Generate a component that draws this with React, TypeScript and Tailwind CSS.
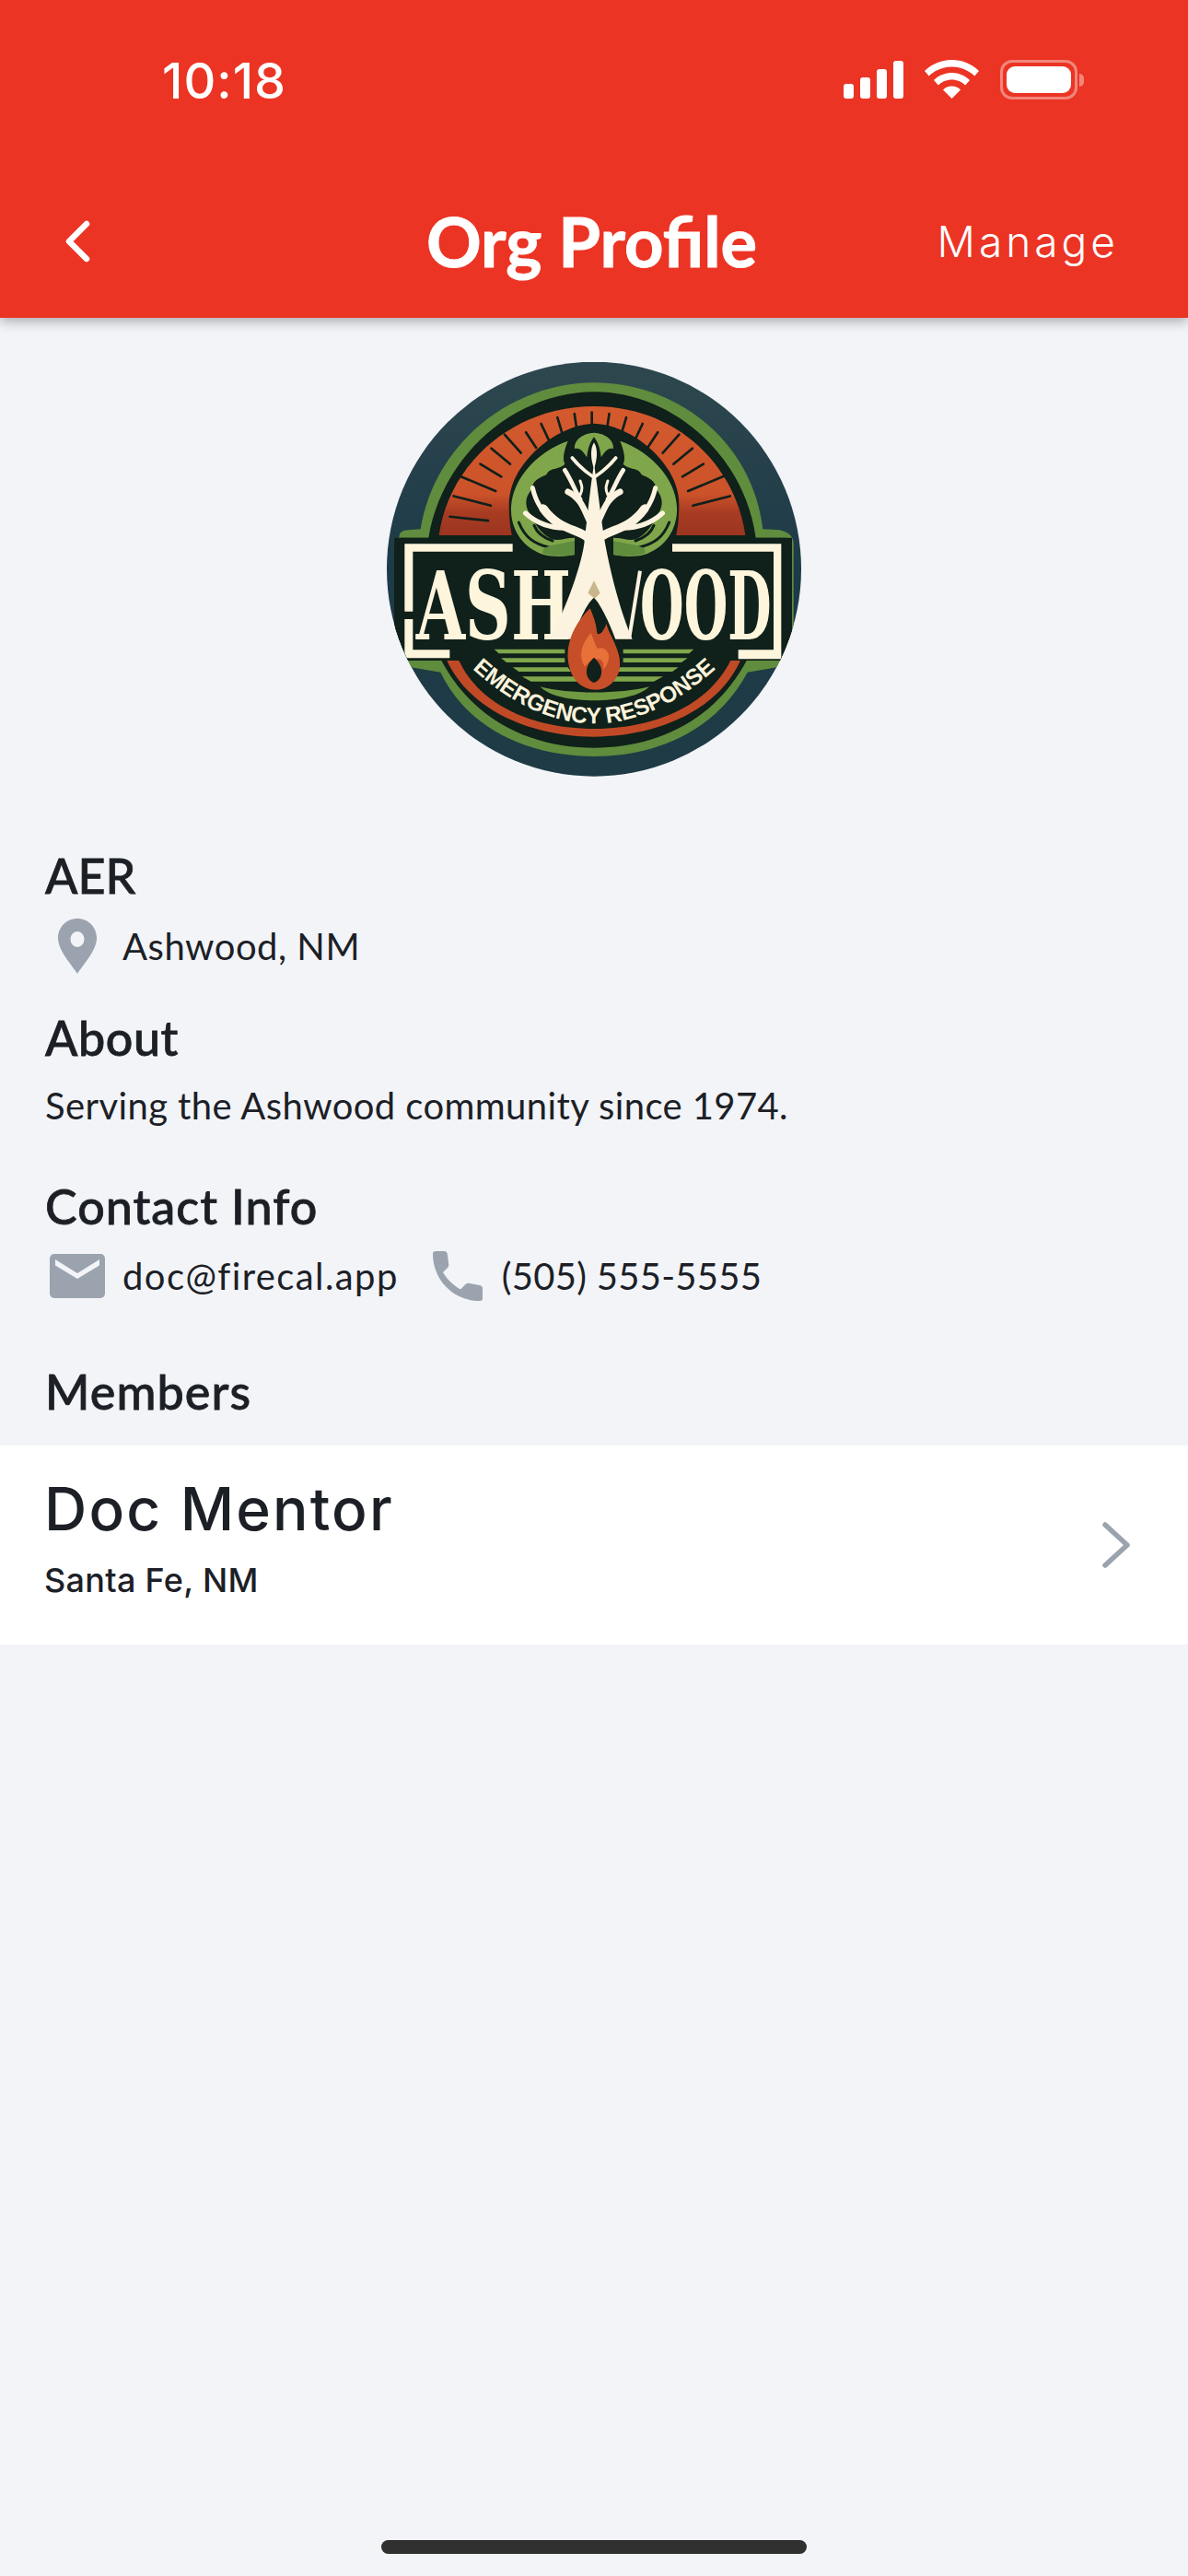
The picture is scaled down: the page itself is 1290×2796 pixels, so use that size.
const ink = "text-[#1c2026]";
const outfit = { fontFamily: "Lato, 'Noto Sans', sans-serif" };
const poppins = { fontFamily: "Inter, 'Noto Sans', sans-serif" };
const head = "[-webkit-text-stroke:0.8px_#1c2026]";

const BLACK = "#10201a";
const CREAM = "#fbf3df";

function HalfFoliage() {
  return (
    <g>
      <path d="M650 325 C560 355 470 440 465 540 C462 610 500 670 570 695 C610 705 650 700 672 695 L672 640 C640 640 610 655 590 640 C560 625 540 590 525 560 C505 530 515 500 535 480 C530 460 555 445 580 435 C590 410 620 420 640 400 C630 380 640 350 650 325 Z" fill="#7fa64a" />
      <path d="M490 590 C510 640 540 660 590 672 M540 600 C550 625 570 640 600 650" fill="none" stroke={BLACK} strokeWidth="9" strokeLinecap="round" />
      <path d="M625 660 C590 665 560 672 570 692 C610 702 650 700 672 695 L672 650 Z" fill="#5f8c3d" />
      <path d="M735 298 C700 300 670 320 672 350 C690 345 700 360 712 378 C715 345 725 325 735 312 Z" fill="#7fa64a" />
    </g>
  );
}

function HalfBranches() {
  return (
    <g fill="none" stroke={CREAM} strokeLinecap="round" strokeLinejoin="round">
      <path d="M715 640 C680 610 620 615 570 545" strokeWidth="28" />
      <path d="M590 570 C560 550 545 520 535 478" strokeWidth="15" />
      <path d="M640 608 C590 608 545 590 512 560" strokeWidth="16" />
      <path d="M722 590 C700 540 690 510 650 490" strokeWidth="20" />
      <path d="M690 515 C670 480 660 450 640 420" strokeWidth="14" />
      <path d="M690 500 C700 480 695 470 690 455" strokeWidth="9" />
      <path d="M730 440 C700 420 680 400 664 380" strokeWidth="11" />
    </g>
  );
}

function Logo() {
  const rays: number[] = [];
  for (let a = -84; a <= 84; a += 8.4) rays.push(a);
  const mirror = "translate(1470,0) scale(-1,1)";
  return (
    <svg viewBox="60 68 1350 1350" className="w-[450px] h-[450px] block">
      <defs>
        <linearGradient id="bgG" x1="0" y1="0" x2="0" y2="1">
          <stop offset="0" stopColor="#30494f" />
          <stop offset="0.5" stopColor="#1d3a48" />
          <stop offset="1" stopColor="#1f3b45" />
        </linearGradient>
        <linearGradient id="redG" x1="0" y1="0" x2="0" y2="1">
          <stop offset="0" stopColor="#d45a2e" />
          <stop offset="0.68" stopColor="#cc5229" />
          <stop offset="0.82" stopColor="#a83c22" />
          <stop offset="1" stopColor="#9c3520" />
        </linearGradient>
        <clipPath id="cc"><circle cx="735" cy="742" r="675" /></clipPath>
        <path id="arcT" d="M 300 1030 Q 735 1460 1170 1030" fill="none" />
      </defs>
      <g clipPath="url(#cc)">
        <rect x="0" y="0" width="1470" height="1470" fill="url(#bgG)" />
        <path d="M100 640 Q100 615 130 615 L170 612 C215 330 470 135 735 135 C1000 135 1250 320 1285 612 L1340 615 Q1385 625 1385 660 L1385 1020 Q1385 1060 1340 1060 L1235 1078 C1130 1275 930 1352 735 1352 C540 1352 330 1275 235 1078 L130 1060 Q85 1060 85 1020 Z" fill="#5f8c3d" />
        <path d="M85 640 H196 C240 370 480 165 735 165 C990 165 1225 370 1262 640 H1380 V1040 H1232 C1120 1250 920 1324 735 1324 C550 1324 350 1250 238 1040 H85 Z" fill={BLACK} />
        <path d="M230 632 C262 400 470 212 735 212 C1000 212 1195 400 1228 632 Z" fill="url(#redG)" />
        <g stroke={BLACK} strokeWidth="8" strokeLinecap="round">
          {rays.map((a) => {
            const r = (a * Math.PI) / 180;
            const cx = 728, cy = 620;
            const abs = Math.abs(a);
            const r2 = abs > 60 ? 465 : abs > 35 ? 425 : 388;
            const r1 = abs > 60 ? 340 : abs > 35 ? 345 : 328;
            return <line key={a} x1={cx + Math.sin(r) * r1} y1={cy - Math.cos(r) * r1} x2={cx + Math.sin(r) * r2} y2={cy - Math.cos(r) * r2} />;
          })}
        </g>
        <rect x="85" y="640" width="1295" height="400" rx="22" fill={BLACK} />
        <path d="M735 268 C860 272 1012 400 1012 530 C1012 620 995 670 975 705 L495 705 C475 670 458 620 458 530 C458 400 610 272 735 268 Z" fill={BLACK} />
        <HalfFoliage />
        <g transform={mirror}><HalfFoliage /></g>
        <path d="M735 330 C722 350 724 385 735 415 C746 385 748 350 735 330 Z" fill={CREAM} />
        <HalfBranches />
        <g transform={mirror}><HalfBranches /></g>
        <path d="M118 660 H470 V685 H145 V880 H118 Z M118 905 H145 V1005 H265 V1032 H118 Z M990 660 H1345 V1035 H1205 V1005 H1320 V685 H990 Z" fill="#fdf5dc" />
        <text x="155" y="970" textLength="505" lengthAdjust="spacingAndGlyphs" fontFamily="'DejaVu Serif', serif" fontWeight="700" fontSize="308" fill="#fdf5dc">ASH</text>
        <text x="885" y="970" textLength="428" lengthAdjust="spacingAndGlyphs" fontFamily="'DejaVu Serif', serif" fontWeight="700" fontSize="308" fill="#fdf5dc">OOD</text>
        <path d="M735 400 C722 480 715 560 705 640 C700 720 640 880 590 970 L665 970 C690 900 715 850 735 835 C760 860 790 930 805 970 L860 970 C820 880 785 740 768 640 C755 560 748 480 735 400 Z" fill={CREAM} />
        <path d="M850 965 L885 748" stroke={CREAM} strokeWidth="12" fill="none" />
        <path d="M715 820 L735 780 L755 820 L738 838 Z" fill="#c9b68c" />
        <path d="M410 1003 H640 V1017 H425 Z M432 1032 H640 V1046 H450 Z M470 1062 H650 L660 1076 H490 Z M500 1092 H680 L700 1108 H530 Z M830 1003 H1060 L1045 1017 H830 Z M830 1032 H1040 L1020 1046 H830 Z M820 1062 H1010 L990 1076 H810 Z M790 1092 H960 L930 1108 H770 Z" fill="#7fa64a" />
        <path d="M560 1125 C650 1150 820 1150 915 1125 C860 1185 610 1185 560 1125 Z" fill="#6f9a42" />
        <path d="M256 1040 C340 1220 560 1288 735 1288 C910 1288 1130 1220 1212 1040 L1180 1040 C1100 1200 910 1262 735 1262 C560 1262 370 1200 295 1040 Z" fill="#c04a26" />
        <path d="M722 870 C640 950 630 1050 680 1110 C720 1150 790 1145 815 1080 C835 1020 785 960 775 920 C765 950 750 960 745 950 C742 920 735 900 722 870 Z" fill="#c64e28" />
        <path d="M725 950 C690 990 685 1030 705 1060 C725 1030 775 1020 765 1070 C800 1030 780 990 745 1000 Z" fill="#e8713a" />
        <path d="M735 1030 C700 1060 705 1100 735 1112 C765 1100 770 1060 735 1030 Z" fill={BLACK} />
        <text fontFamily="'Liberation Sans', sans-serif" fontWeight="700" fontSize="74" fill="#fbf3dc" letterSpacing="-1">
          <textPath href="#arcT" startOffset="50%" textAnchor="middle">EMERGENCY RESPONSE</textPath>
        </text>
      </g>
    </svg>
  );
}

function StatusIcons() {
  return (
    <div className="flex items-start gap-[23px]">
      <svg width="65" height="41" viewBox="0 0 65 41" fill="#fff" className="block mt-[1px]">
        <rect x="0" y="25" width="11" height="16" rx="3" />
        <rect x="18" y="18" width="11" height="23" rx="3" />
        <rect x="36" y="9" width="11" height="32" rx="3" />
        <rect x="54" y="0" width="11" height="41" rx="3" />
      </svg>
      <svg width="59" height="42" viewBox="0 0 59 42" fill="#fff" className="block">
        <path d="M29.500 0C18 0 7.500 4.600 0 12L4.700 17.500C11 11.500 19.800 7.500 29.500 7.500S48 11.500 54.300 17.500L59 12C51.500 4.600 41 0 29.500 0Z" />
        <path d="M29.500 14C22 14 15 17 10 22L14.800 27.500C18.500 23.800 23.800 21.500 29.500 21.500S40.500 23.800 44.200 27.500L49 22C44 17 37 14 29.500 14Z" />
        <path d="M29.500 28.500C25.800 28.500 22.500 30 20 32.500L29.500 42L39 32.500C36.500 30 33.200 28.500 29.500 28.500Z" />
      </svg>
      <div className="flex items-center gap-[2px]">
        <div className="w-[84px] h-[43px] rounded-[13px] border-[3px] border-white/40 p-[4px]">
          <div className="w-full h-full bg-white rounded-[9px]" />
        </div>
        <div className="w-[5px] h-[14px] rounded-r-full bg-white/40" />
      </div>
    </div>
  );
}

export default function App() {
  return (
    <div className={`w-[1290px] h-[2796px] bg-[#f2f4f8] flex flex-col relative overflow-hidden ${ink}`} style={outfit}>
      <header className="h-[345px] bg-[#ec3424] shadow-[0_4px_12px_rgba(0,0,0,0.3)] z-10 flex flex-col text-white shrink-0">
        <div className="h-[65px] shrink-0" />
        <div className="flex items-start justify-between pl-[176px] pr-[113px] h-[157px] shrink-0">
          <div className="text-[54px] leading-[46px] font-medium tracking-[1px]" style={poppins}>10:18</div>
          <StatusIcons />
        </div>
        <div className="grid grid-cols-[1fr_auto_1fr] items-center pl-[70px] pr-[75px] h-[80px]">
          <svg width="28" height="46" viewBox="0 0 28 46" fill="none" stroke="#fff" strokeWidth="6.500" strokeLinecap="round" strokeLinejoin="round">
            <path d="M24 4 L5 23 L24 42" />
          </svg>
          <div className="text-[74px] leading-[80px] font-bold [-webkit-text-stroke:1px_#fff]">Org Profile</div>
          <div className="text-[46px] leading-[80px] text-right font-light tracking-[4px]" style={poppins}>Manage</div>
        </div>
      </header>

      <div className="flex justify-center pt-[48px] shrink-0">
        <Logo />
      </div>

      <section className="px-[49px] pt-[77px] shrink-0">
        <h2 className={`text-[52px] leading-[60px] font-medium ${head}`}>AER</h2>
        <div className="flex items-center gap-[28px] h-[60px] mt-[17px] pl-[14px]">
          <svg width="42" height="60" viewBox="0 0 42 60" fill="#9aa3ae">
            <path fillRule="evenodd" d="M21 0C9.400 0 0 9.200 0 21C0 35 15 50 21 60C27 50 42 35 42 21C42 9.200 32.600 0 21 0ZM21 14a7.500 8.500 0 1 1 0 17a7.500 8.500 0 0 1 0-17Z" />
          </svg>
          <span className="text-[40px] leading-[60px] tracking-[0.5px]">Ashwood, NM</span>
        </div>
        <h2 className={`text-[52px] leading-[60px] font-medium mt-[39px] tracking-[0.6px] ${head}`}>About</h2>
        <p className="text-[40px] leading-[50px] mt-[19px] tracking-[0.4px]">Serving the Ashwood community since 1974.</p>
        <h2 className={`text-[52px] leading-[60px] font-medium mt-[54px] tracking-[1px] ${head}`}>Contact Info</h2>
        <div className="flex items-center h-[56px] mt-[18px] pl-[5px]">
          <svg width="60" height="48" viewBox="0 0 60 48" className="shrink-0">
            <rect width="60" height="48" rx="5" fill="#9aa3ae" />
            <path d="M6 6 L30 21 L54 6 L54 12.500 L30 27 L6 12.500 Z" fill="#f2f4f8" />
          </svg>
          <span className="text-[40px] leading-[56px] ml-[19px] tracking-[1.400px]">doc@firecal.app</span>
          <svg width="54" height="54" viewBox="0 0 54 54" fill="#9aa3ae" className="ml-[37px] shrink-0">
            <path d="M0 3C0 1 1 0 3 0H12C14 0 15.500 1 15.800 3L17.200 14C17.400 16 17 17 16 18L11 23C16 31 22 37 30 41.500L35 36.500C36.500 35 38 34.600 40 35L51 37C53 37.400 54 38.500 54 40.500V51C54 53 53 54 51 54C22 54 0 31 0 3Z" />
          </svg>
          <span className="text-[40px] leading-[56px] ml-[21px] tracking-[0.3px]">(505) 555-5555</span>
        </div>
        <h2 className={`text-[52px] leading-[60px] font-medium mt-[67px] tracking-[1.100px] ${head}`}>Members</h2>
      </section>

      <div className="bg-white h-[216px] mt-[29px] pl-[48px] pr-[63px] flex items-start justify-between shrink-0" style={poppins}>
        <div className="pt-[31px]">
          <div className="text-[64px] leading-[76px] font-medium tracking-[2.200px]">Doc Mentor</div>
          <div className="text-[36px] leading-[44px] mt-[17px] font-medium tracking-[0.300px]">Santa Fe, NM</div>
        </div>
        <svg width="30" height="50" viewBox="0 0 30 50" fill="none" stroke="#9aa3ae" strokeWidth="5.500" strokeLinecap="round" strokeLinejoin="round" className="self-center">
          <path d="M3 3 L27 25 L3 47" />
        </svg>
      </div>

      <div className="absolute left-[414px] top-[2757px] w-[462px] h-[15px] rounded-full bg-[#303030]" />
    </div>
  );
}
